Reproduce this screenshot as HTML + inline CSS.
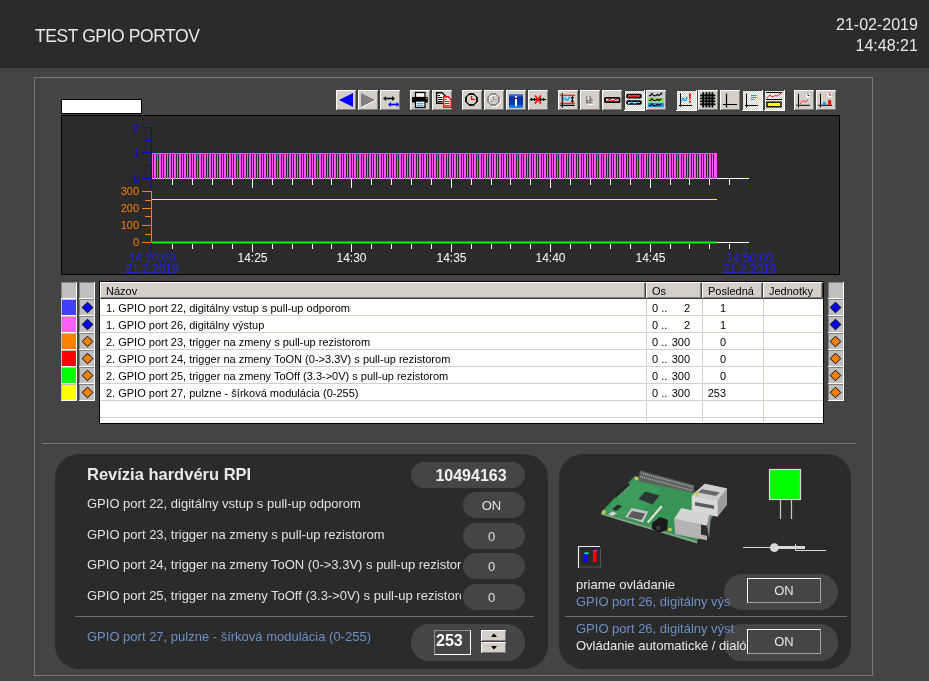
<!DOCTYPE html>
<html><head><meta charset="utf-8">
<style>
*{margin:0;padding:0;box-sizing:border-box}
html,body{width:929px;height:681px;overflow:hidden;background:#444444;font-family:"Liberation Sans",sans-serif;}
.a{position:absolute}
.tt,.lb,#title,#date,svg text{will-change:transform}
#hdr{left:0;top:0;width:929px;height:68px;background:#2b2b2b}
#title{left:35px;top:26px;font-size:17.5px;letter-spacing:-0.42px;color:#e8e8e8;white-space:nowrap}
#date{right:11px;top:15px;font-size:16px;color:#e8e8e8;text-align:right;line-height:20.5px}
#frame{left:34px;top:77px;width:839px;height:599px;border:1px solid #777}
#whitebox{left:61px;top:99px;width:81px;height:15px;background:#fff;border:1px solid #000}
#chart{left:61px;top:115px;width:779px;height:160px;background:#2b2b2b;border:1px solid #000}
.btn{position:absolute;top:90px;width:20px;height:20px;background:#d4d0c8;border-top:1px solid #fff;border-left:1px solid #fff;border-right:1px solid #808080;border-bottom:1px solid #808080}
.sw{position:absolute;width:17px;height:17px;border:1px solid #c0c0c0}
#tbl{left:99px;top:281px;width:725px;height:143px;background:#fff;border:1px solid #000;font-size:11px;color:#000}
.dp{background:#2b2b2b;border-radius:24px}
.pill{position:absolute;background:#444;border-radius:14px;color:#e6e6e6;text-align:center}
.lbl{position:absolute;color:#e0e0e0;font-size:13px;white-space:nowrap}
.blu{color:#6f92c0}
.lb{white-space:nowrap;line-height:normal}
.pl{background:#454545}
.tt{font-size:11px;color:#000;white-space:nowrap;line-height:13px}
</style></head>
<body>
<div id="hdr" class="a"></div>
<div id="title" class="a">TEST GPIO PORTOV</div>
<div id="date" class="a">21-02-2019<br>14:48:21</div>
<div id="frame" class="a"></div>
<div id="whitebox" class="a"></div>
<!--TB--><svg class="a" style="left:0;top:0" width="929" height="681" viewBox="0 0 929 681"><defs><pattern id="chk" x="0" y="0" width="2" height="2" patternUnits="userSpaceOnUse"><rect width="1" height="1" fill="#ffffff"/><rect x="1" y="1" width="1" height="1" fill="#ffffff"/></pattern><linearGradient id="ig" x1="0" y1="0" x2="0" y2="1"><stop offset="0" stop-color="#6a8cf0"/><stop offset="0.25" stop-color="#0a2a9a"/><stop offset="0.7" stop-color="#0a3aaa"/><stop offset="1" stop-color="#1090ff"/></linearGradient></defs><rect x="336" y="90" width="21" height="21" fill="#404040"/><rect x="336" y="90" width="20" height="20" fill="#ffffff"/><rect x="337" y="91" width="19" height="19" fill="#808080"/><rect x="337" y="91" width="18" height="18" fill="#d4d0c8"/><rect x="358" y="90" width="21" height="21" fill="#404040"/><rect x="358" y="90" width="20" height="20" fill="#ffffff"/><rect x="359" y="91" width="19" height="19" fill="#808080"/><rect x="359" y="91" width="18" height="18" fill="#d4d0c8"/><rect x="380" y="90" width="21" height="21" fill="#404040"/><rect x="380" y="90" width="20" height="20" fill="#ffffff"/><rect x="381" y="91" width="19" height="19" fill="#808080"/><rect x="381" y="91" width="18" height="18" fill="#d4d0c8"/><rect x="410" y="90" width="21" height="21" fill="#404040"/><rect x="410" y="90" width="20" height="20" fill="#ffffff"/><rect x="411" y="91" width="19" height="19" fill="#808080"/><rect x="411" y="91" width="18" height="18" fill="#d4d0c8"/><rect x="432" y="90" width="21" height="21" fill="#404040"/><rect x="432" y="90" width="20" height="20" fill="#ffffff"/><rect x="433" y="91" width="19" height="19" fill="#808080"/><rect x="433" y="91" width="18" height="18" fill="#d4d0c8"/><rect x="462" y="90" width="21" height="21" fill="#404040"/><rect x="462" y="90" width="20" height="20" fill="#ffffff"/><rect x="463" y="91" width="19" height="19" fill="#808080"/><rect x="463" y="91" width="18" height="18" fill="#d4d0c8"/><rect x="484" y="90" width="21" height="21" fill="#404040"/><rect x="484" y="90" width="20" height="20" fill="#ffffff"/><rect x="485" y="91" width="19" height="19" fill="#808080"/><rect x="485" y="91" width="18" height="18" fill="#d4d0c8"/><rect x="506" y="90" width="21" height="21" fill="#404040"/><rect x="506" y="90" width="20" height="20" fill="#ffffff"/><rect x="507" y="91" width="19" height="19" fill="#808080"/><rect x="507" y="91" width="18" height="18" fill="#d4d0c8"/><rect x="528" y="90" width="21" height="21" fill="#404040"/><rect x="528" y="90" width="20" height="20" fill="#ffffff"/><rect x="529" y="91" width="19" height="19" fill="#808080"/><rect x="529" y="91" width="18" height="18" fill="#d4d0c8"/><rect x="558" y="90" width="21" height="21" fill="#404040"/><rect x="558" y="90" width="20" height="20" fill="#ffffff"/><rect x="559" y="91" width="19" height="19" fill="#808080"/><rect x="559" y="91" width="18" height="18" fill="#d4d0c8"/><rect x="580" y="90" width="21" height="21" fill="#404040"/><rect x="580" y="90" width="20" height="20" fill="#ffffff"/><rect x="581" y="91" width="19" height="19" fill="#808080"/><rect x="581" y="91" width="18" height="18" fill="#d4d0c8"/><rect x="602" y="90" width="21" height="21" fill="#404040"/><rect x="602" y="90" width="20" height="20" fill="#ffffff"/><rect x="603" y="91" width="19" height="19" fill="#808080"/><rect x="603" y="91" width="18" height="18" fill="#d4d0c8"/><rect x="624" y="90" width="21" height="21" fill="#ffffff"/><rect x="624" y="90" width="20" height="20" fill="#404040"/><rect x="625" y="91" width="19" height="19" fill="#d4d0c8"/><rect x="625" y="91" width="19" height="19" fill="url(#chk)"/><rect x="646" y="90" width="21" height="21" fill="#404040"/><rect x="646" y="90" width="20" height="20" fill="#ffffff"/><rect x="647" y="91" width="19" height="19" fill="#808080"/><rect x="647" y="91" width="18" height="18" fill="#d4d0c8"/><rect x="676" y="90" width="21" height="21" fill="#ffffff"/><rect x="676" y="90" width="20" height="20" fill="#404040"/><rect x="677" y="91" width="19" height="19" fill="#d4d0c8"/><rect x="677" y="91" width="19" height="19" fill="url(#chk)"/><rect x="698" y="90" width="21" height="21" fill="#404040"/><rect x="698" y="90" width="20" height="20" fill="#ffffff"/><rect x="699" y="91" width="19" height="19" fill="#808080"/><rect x="699" y="91" width="18" height="18" fill="#d4d0c8"/><rect x="720" y="90" width="21" height="21" fill="#404040"/><rect x="720" y="90" width="20" height="20" fill="#ffffff"/><rect x="721" y="91" width="19" height="19" fill="#808080"/><rect x="721" y="91" width="18" height="18" fill="#d4d0c8"/><rect x="742" y="90" width="21" height="21" fill="#ffffff"/><rect x="742" y="90" width="20" height="20" fill="#404040"/><rect x="743" y="91" width="19" height="19" fill="#d4d0c8"/><rect x="743" y="91" width="19" height="19" fill="url(#chk)"/><rect x="764" y="90" width="21" height="21" fill="#ffffff"/><rect x="764" y="90" width="20" height="20" fill="#404040"/><rect x="765" y="91" width="19" height="19" fill="#d4d0c8"/><rect x="765" y="91" width="19" height="19" fill="url(#chk)"/><rect x="794" y="90" width="21" height="21" fill="#404040"/><rect x="794" y="90" width="20" height="20" fill="#ffffff"/><rect x="795" y="91" width="19" height="19" fill="#808080"/><rect x="795" y="91" width="18" height="18" fill="#d4d0c8"/><rect x="816" y="90" width="21" height="21" fill="#404040"/><rect x="816" y="90" width="20" height="20" fill="#ffffff"/><rect x="817" y="91" width="19" height="19" fill="#808080"/><rect x="817" y="91" width="18" height="18" fill="#d4d0c8"/><g transform="translate(336,90)"><polygon points="3,10 17,3 17,17" fill="#0000ff"/></g><g transform="translate(358,90)"><polygon points="3,3 17,10 3,17" fill="#808080"/><path d="M3.5,17.5 L17.5,10.5" stroke="#ffffff" stroke-width="1"/></g><g transform="translate(380,90)"><path d="M3.5,8.5 H14.5" stroke="#000" stroke-width="1.6"/><path d="M3.5,8.5 l2.5,-2.5 v5 z M14.5,8.5 l-2.5,-2.5 v5 z" fill="#000"/><path d="M8.5,14.5 H19" stroke="#0000ff" stroke-width="1.6"/><path d="M8.5,14.5 l2.5,-2.5 v5 z M19,14.5 l-2.5,-2.5 v5 z" fill="#0000ff"/></g><g transform="translate(410,90)"><rect x="5.5" y="2.5" width="9.5" height="5" fill="#fff" stroke="#000" stroke-width="1.3"/><rect x="2" y="7" width="15.8" height="5.5" fill="#000"/><rect x="5.5" y="11" width="9.5" height="6.5" fill="#fff" stroke="#000" stroke-width="1.3"/><rect x="7" y="13.2" width="6.5" height="1" fill="#2090e0"/><rect x="7" y="15.2" width="6.5" height="1" fill="#2090e0"/><rect x="16" y="8" width="1" height="1" fill="#80ff40"/></g><g transform="translate(432,90)"><path d="M4.7,2.7 H10 L13.3,6 V13.3 H4.7 Z" fill="#fff" stroke="#000" stroke-width="1.4"/><circle cx="10.5" cy="5.5" r="0.8" fill="#fff"/><rect x="6" y="5" width="2" height="1" fill="#000"/><rect x="6" y="7" width="4.5" height="1" fill="#000"/><rect x="6" y="9" width="4.5" height="1" fill="#000"/><rect x="6" y="11" width="4.5" height="1" fill="#000"/><path d="M11.8,6.8 H16.2 L19.2,9.8 V17.2 H11.8 Z" fill="#fff" stroke="#ff0000" stroke-width="1.4"/><rect x="13" y="9" width="1.5" height="1" fill="#ff0000"/><rect x="13" y="11" width="4.6" height="1" fill="#ff0000"/><rect x="13" y="13" width="4.6" height="1" fill="#ff0000"/><rect x="13" y="15" width="4.6" height="1" fill="#ff0000"/></g><g transform="translate(462,90)"><polygon points="7.2,4 11.7,4 14.9,7.2 14.9,11.7 11.7,14.9 7.2,14.9 4,11.7 4,7.2" fill="none" stroke="#000" stroke-width="1.1"/><path d="M7,4 H12 M15,7 V12 M7,15 H12 M4,7 V12" stroke="#000" stroke-width="1.6"/><path d="M9.5,6 V9.3 H12.8" fill="none" stroke="#ff0000" stroke-width="1.3"/></g><g transform="translate(484,90)"><g transform="translate(1,1)"><polygon points="7.2,4 11.7,4 14.9,7.2 14.9,11.7 11.7,14.9 7.2,14.9 4,11.7 4,7.2" fill="none" stroke="#ffffff" stroke-width="1.1"/><path d="M7,4 H12 M15,7 V12 M7,15 H12 M4,7 V12" stroke="#ffffff" stroke-width="1.6"/></g><polygon points="7.2,4 11.7,4 14.9,7.2 14.9,11.7 11.7,14.9 7.2,14.9 4,11.7 4,7.2" fill="none" stroke="#808080" stroke-width="1.1"/><path d="M7,4 H12 M15,7 V12 M7,15 H12 M4,7 V12" stroke="#808080" stroke-width="1.6"/><circle cx="9.5" cy="7.5" r="0.6" fill="#505050"/><circle cx="9.5" cy="9.5" r="0.6" fill="#505050"/><circle cx="12" cy="9.5" r="0.6" fill="#505050"/><circle cx="7.5" cy="11.5" r="0.6" fill="#505050"/></g><g transform="translate(506,90)"><rect x="3" y="4" width="14" height="14" fill="url(#ig)"/><rect x="9" y="6" width="2" height="1.7" fill="#fff"/><rect x="9" y="9" width="2" height="7.3" fill="#fff"/></g><g transform="translate(528,90)"><path d="M2,9.5 H18" stroke="#000" stroke-width="1.3"/><path d="M3,8 l1.5,1.5 l-1.5,1.5 M16,8 l-1.5,1.5 l1.5,1.5 M6,8 l1.5,1.5 l-1.5,1.5 M13,8 l-1.5,1.5 l1.5,1.5" stroke="#000" fill="none" stroke-width="1"/><path d="M7,5.5 L13,13.5 M13,5.5 L7,13.5" stroke="#ff0000" stroke-width="1.6"/></g><g transform="translate(558,90)"><path d="M2.2,5.4 H17 M2.2,13.3 H17" stroke="#ff2020" stroke-width="1.2"/><path d="M4.3,3.3 V17.7 M2.2,15.3 H16.7" stroke="#000" stroke-width="1.2"/><path d="M5,11.5 L6,8.2 H7.5 L8.2,10 H10 L10.7,7.5 H12" fill="none" stroke="#20a8ff" stroke-width="1.3"/><path d="M14.4,7 V12" stroke="#000" stroke-width="1.1"/><path d="M14.4,6 l-1.8,2.2 h3.6 z M14.4,13 l-1.8,-2.2 h3.6 z" fill="#000"/></g><g transform="translate(580,90)"><path d="M7.2,14.3 H13.5 M14,11 L12,13" stroke="#fff" stroke-width="1"/><g fill="#808080"><rect x="6" y="6" width="1.4" height="7.5"/><rect x="6" y="12" width="6.8" height="1.3"/><rect x="9.3" y="6" width="1.5" height="6"/><polygon points="10.7,8 13.6,10 10.7,11.6"/><rect x="6" y="10.2" width="3.4" height="1.1"/></g><path d="M7.4,7.3 H9.2 M7.4,9.3 H9.2" stroke="#fff" stroke-width="0.9"/></g><g transform="translate(602,90)"><rect x="3" y="7.9" width="14.5" height="4.3" rx="0.8" fill="#fff" stroke="#000" stroke-width="1.8"/><path d="M3.8,11 l2,-0.3 l2,-1.5 l1.5,1.5 l2.5,0 l2,-1.5 l2,1" fill="none" stroke="#ff0000" stroke-width="1.1"/></g><g transform="translate(624,90)"><rect x="3.1" y="4.7" width="13.8" height="2.8" rx="0.8" fill="#fff" stroke="#000" stroke-width="1.8"/><path d="M3.8,7.2 l2,-0.3 l2,-1.5 l1.5,1.5 l2.5,0 l2,-1.5 l2,1" fill="none" stroke="#ff0000" stroke-width="1.1"/><rect x="3.1" y="11.1" width="13.8" height="2.8" rx="0.8" fill="#fff" stroke="#000" stroke-width="1.8"/><path d="M3.8,13.6 l2,-0.3 l2,-1.5 l1.5,1.5 l2.5,0 l2,-1.5 l2,1" fill="none" stroke="#20a0ff" stroke-width="1.1"/></g><g transform="translate(646,90)"><rect x="2" y="2.2" width="16" height="4.5" fill="#c8c4dc"/><rect x="2" y="7.8" width="16" height="3.8" fill="#80e040"/><rect x="2" y="12.7" width="16" height="4.5" fill="#1898e8"/><path d="M3,5.6 H4.5 L6,3.5 L7.5,5.6 H10 L11.5,4.3 L13,5.6 L15.5,3.5" fill="none" stroke="#000" stroke-width="1.1"/><circle cx="15.5" cy="3.5" r="0.9" fill="#000"/><path d="M3,10.5 H4.5 L6,8.6 L7.5,10.5 H10 L11.5,9.2 L13,10.5 L15.5,8.6" fill="none" stroke="#000" stroke-width="1.1"/><path d="M3,15.6 H4.5 L6,13.6 L7.5,15.6 H10 L11.5,14.2 L13,15.6 L15.5,13.6" fill="none" stroke="#000" stroke-width="1.1"/></g><g transform="translate(676,90)"><rect x="4" y="3.3" width="1" height="13.4" fill="#000"/><rect x="3" y="15" width="13.2" height="1" fill="#000"/><path d="M5.1,11.6 L6.5,8.4 H7.6 L8.1,10.3 H10 L10.5,7.3 H11.6" fill="none" stroke="#20a0ff" stroke-width="1.3"/><polygon points="12.9,3.5 14.9,3.5 14.5,9.8 13.3,9.8" fill="#ff0000"/><rect x="13" y="10.8" width="1.8" height="1.8" fill="#ff0000"/></g><g transform="translate(698,90)"><rect x="4.3" y="2.2" width="1.8" height="15.3" fill="#000"/><rect x="7.5" y="2.2" width="1.8" height="15.3" fill="#000"/><rect x="10.5" y="2.2" width="1.8" height="15.3" fill="#000"/><rect x="13.5" y="2.2" width="1.8" height="15.3" fill="#000"/><rect x="2.3" y="4.5" width="15" height="1.8" fill="#000"/><rect x="2.3" y="7.5" width="15" height="1.8" fill="#000"/><rect x="2.3" y="10.4" width="15" height="1.8" fill="#000"/><rect x="2.3" y="13.4" width="15" height="1.8" fill="#000"/></g><g transform="translate(720,90)"><path d="M6.5,3.5 V17.5 M3,14.5 H17" stroke="#000" stroke-width="1.2"/></g><g transform="translate(742,90)"><rect x="4" y="3.6" width="1" height="13.9" fill="#000"/><rect x="3" y="15" width="12.8" height="1" fill="#000"/><rect x="9" y="5" width="6" height="1" fill="#20a0ff"/><rect x="9" y="7" width="6" height="1" fill="#20a0ff"/><rect x="9" y="9" width="3.5" height="1" fill="#20a0ff"/></g><g transform="translate(764,90)"><rect x="2.2" y="2" width="15.9" height="1" fill="#000"/><rect x="2.2" y="9" width="15.9" height="1" fill="#000"/><path d="M2.5,8 L4.5,6.5 L6,5 L7.5,6.5 L9.5,6.5 L11.5,5.5 L13.5,6 L16.5,3.5" fill="none" stroke="#ff2020" stroke-width="1"/><path d="M17.5,3 l-2,0.3 l1.2,1.5 z" fill="#ff2020"/><rect x="3" y="12.2" width="14" height="4.6" fill="#ffff00" stroke="#000" stroke-width="1.4"/></g><g transform="translate(794,90)"><rect x="4" y="3.8" width="1" height="13.7" fill="#000"/><rect x="2.2" y="14.8" width="13.7" height="1" fill="#000"/><path d="M6.1,13.9 L9.2,10.3 L11.1,12.2 L13.9,10" fill="none" stroke="#ff2020" stroke-width="1"/><circle cx="13.9" cy="5.5" r="3.1" fill="#fff" stroke="#a8c0c8" stroke-width="0.9"/><rect x="17" y="4.8" width="1.2" height="1.5" fill="#a8b8c0"/><path d="M13.9,3.3 V5.5 H15.6" fill="none" stroke="#404040" stroke-width="1"/></g><g transform="translate(816,90)"><rect x="4" y="3.8" width="1" height="13.7" fill="#000"/><rect x="2.2" y="14.8" width="13.7" height="1" fill="#000"/><rect x="7" y="12" width="2.8" height="3" fill="#1898e8"/><rect x="12.1" y="10" width="3" height="5" fill="#ff1010"/><circle cx="13.7" cy="5.2" r="3.1" fill="#fff" stroke="#a8c0c8" stroke-width="0.9"/><rect x="16.8" y="4.5" width="1.2" height="1.5" fill="#a8b8c0"/><path d="M13.7,3 V5.2 H15.4" fill="none" stroke="#ff0000" stroke-width="1"/></g></svg><!--/TB-->
<div id="chart" class="a"></div>
<svg class="a" style="left:0;top:0" width="929" height="681" viewBox="0 0 929 681" font-family="Liberation Sans" font-size="11"><defs><pattern id="pm" x="153" y="153" width="5" height="26" patternUnits="userSpaceOnUse"><rect x="0" y="0" width="5" height="26" fill="#ff55ff"/><rect x="0" y="1" width="1" height="24" fill="#2b2b2b"/><rect x="3" y="1" width="1" height="24" fill="#2b2b2b"/><rect x="0" y="25" width="1" height="1" fill="#ffffff"/><rect x="3" y="25" width="1" height="1" fill="#ffffff"/></pattern></defs><rect x="152" y="178" width="597" height="1" fill="#ffffff"/><rect x="152" y="153" width="565" height="26" fill="url(#pm)"/><rect x="716" y="153" width="1" height="26" fill="#ff55ff"/><rect x="151" y="127" width="1" height="61" fill="#0000ff"/><rect x="142" y="127" width="10" height="1" fill="#0000ff"/><rect x="145" y="140" width="7" height="1" fill="#0000ff"/><rect x="142" y="152" width="10" height="1" fill="#0000ff"/><rect x="145" y="165" width="7" height="1" fill="#0000ff"/><rect x="142" y="178" width="10" height="1" fill="#0000ff"/><rect x="151" y="191" width="1" height="52" fill="#ff8000"/><rect x="142" y="191" width="10" height="1" fill="#ff8000"/><rect x="145" y="200" width="7" height="1" fill="#ff8000"/><rect x="142" y="208" width="10" height="1" fill="#ff8000"/><rect x="145" y="216" width="7" height="1" fill="#ff8000"/><rect x="142" y="225" width="10" height="1" fill="#ff8000"/><rect x="145" y="234" width="7" height="1" fill="#ff8000"/><rect x="142" y="242" width="10" height="1" fill="#ff8000"/><rect x="152" y="199" width="565" height="1" fill="#ffff00"/><rect x="152" y="242" width="597" height="1" fill="#ffffff"/><rect x="152" y="241" width="565" height="1" fill="#9a4c1c"/><rect x="152" y="242" width="565" height="1" fill="#00ff00"/><rect x="152" y="243" width="565" height="1" fill="#9a4c1c"/><rect x="172" y="179" width="1" height="6" fill="#ffffff"/><rect x="172" y="244" width="1" height="5" fill="#ffffff"/><rect x="192" y="179" width="1" height="6" fill="#ffffff"/><rect x="192" y="244" width="1" height="5" fill="#ffffff"/><rect x="212" y="179" width="1" height="6" fill="#ffffff"/><rect x="212" y="244" width="1" height="5" fill="#ffffff"/><rect x="232" y="179" width="1" height="6" fill="#ffffff"/><rect x="232" y="244" width="1" height="5" fill="#ffffff"/><rect x="252" y="179" width="1" height="9" fill="#ffffff"/><rect x="252" y="244" width="1" height="8" fill="#ffffff"/><rect x="272" y="179" width="1" height="6" fill="#ffffff"/><rect x="272" y="244" width="1" height="5" fill="#ffffff"/><rect x="292" y="179" width="1" height="6" fill="#ffffff"/><rect x="292" y="244" width="1" height="5" fill="#ffffff"/><rect x="312" y="179" width="1" height="6" fill="#ffffff"/><rect x="312" y="244" width="1" height="5" fill="#ffffff"/><rect x="331" y="179" width="1" height="6" fill="#ffffff"/><rect x="331" y="244" width="1" height="5" fill="#ffffff"/><rect x="351" y="179" width="1" height="9" fill="#ffffff"/><rect x="351" y="244" width="1" height="8" fill="#ffffff"/><rect x="371" y="179" width="1" height="6" fill="#ffffff"/><rect x="371" y="244" width="1" height="5" fill="#ffffff"/><rect x="391" y="179" width="1" height="6" fill="#ffffff"/><rect x="391" y="244" width="1" height="5" fill="#ffffff"/><rect x="411" y="179" width="1" height="6" fill="#ffffff"/><rect x="411" y="244" width="1" height="5" fill="#ffffff"/><rect x="431" y="179" width="1" height="6" fill="#ffffff"/><rect x="431" y="244" width="1" height="5" fill="#ffffff"/><rect x="451" y="179" width="1" height="9" fill="#ffffff"/><rect x="451" y="244" width="1" height="8" fill="#ffffff"/><rect x="471" y="179" width="1" height="6" fill="#ffffff"/><rect x="471" y="244" width="1" height="5" fill="#ffffff"/><rect x="491" y="179" width="1" height="6" fill="#ffffff"/><rect x="491" y="244" width="1" height="5" fill="#ffffff"/><rect x="510" y="179" width="1" height="6" fill="#ffffff"/><rect x="510" y="244" width="1" height="5" fill="#ffffff"/><rect x="530" y="179" width="1" height="6" fill="#ffffff"/><rect x="530" y="244" width="1" height="5" fill="#ffffff"/><rect x="550" y="179" width="1" height="9" fill="#ffffff"/><rect x="550" y="244" width="1" height="8" fill="#ffffff"/><rect x="570" y="179" width="1" height="6" fill="#ffffff"/><rect x="570" y="244" width="1" height="5" fill="#ffffff"/><rect x="590" y="179" width="1" height="6" fill="#ffffff"/><rect x="590" y="244" width="1" height="5" fill="#ffffff"/><rect x="610" y="179" width="1" height="6" fill="#ffffff"/><rect x="610" y="244" width="1" height="5" fill="#ffffff"/><rect x="630" y="179" width="1" height="6" fill="#ffffff"/><rect x="630" y="244" width="1" height="5" fill="#ffffff"/><rect x="650" y="179" width="1" height="9" fill="#ffffff"/><rect x="650" y="244" width="1" height="8" fill="#ffffff"/><rect x="670" y="179" width="1" height="6" fill="#ffffff"/><rect x="670" y="244" width="1" height="5" fill="#ffffff"/><rect x="689" y="179" width="1" height="6" fill="#ffffff"/><rect x="689" y="244" width="1" height="5" fill="#ffffff"/><rect x="709" y="179" width="1" height="6" fill="#ffffff"/><rect x="709" y="244" width="1" height="5" fill="#ffffff"/><rect x="729" y="179" width="1" height="6" fill="#ffffff"/><rect x="729" y="244" width="1" height="5" fill="#ffffff"/><rect x="749" y="179" width="1" height="9" fill="#0000ff"/><rect x="749" y="244" width="1" height="8" fill="#0000ff"/><rect x="151" y="243" width="1" height="9" fill="#0000ff"/><text x="139" y="131.5" text-anchor="end" fill="#0000ff">2</text><text x="139" y="156.5" text-anchor="end" fill="#0000ff">1</text><text x="139" y="182.5" text-anchor="end" fill="#0000ff">0</text><text x="139" y="195" text-anchor="end" fill="#ff8000">300</text><text x="139" y="212" text-anchor="end" fill="#ff8000">200</text><text x="139" y="229" text-anchor="end" fill="#ff8000">100</text><text x="139" y="246" text-anchor="end" fill="#ff8000">0</text><text x="252.5" y="262" text-anchor="middle" fill="#ffffff" font-size="12">14:25</text><text x="351.5" y="262" text-anchor="middle" fill="#ffffff" font-size="12">14:30</text><text x="451.5" y="262" text-anchor="middle" fill="#ffffff" font-size="12">14:35</text><text x="550.5" y="262" text-anchor="middle" fill="#ffffff" font-size="12">14:40</text><text x="650.5" y="262" text-anchor="middle" fill="#ffffff" font-size="12">14:45</text><text x="152" y="262" text-anchor="middle" fill="#2020ff" font-size="12">14:20:00</text><text x="152" y="273" text-anchor="middle" fill="#2020ff" font-size="12">21.2.2019</text><text x="749.5" y="262" text-anchor="middle" fill="#2020ff" font-size="12">14:50:00</text><text x="749.5" y="273" text-anchor="middle" fill="#2020ff" font-size="12">21.2.2019</text></svg>
<!--TBL--><div class="a" style="left:99px;top:281px;width:725px;height:143px;background:#fff;border:1px solid #000"></div>
<div class="a" style="left:100px;top:282px;width:723px;height:16px;background:#d4d0c8"></div>
<div class="a" style="left:100px;top:298px;width:723px;height:1px;background:#404040"></div>
<div class="a" style="left:100px;top:282px;width:546px;height:16px;border-top:1px solid #fff;border-left:1px solid #fff;border-right:1px solid #404040;background:#d4d0c8;box-shadow:inset -1px -1px 0 #808080"></div>
<div class="a" style="left:646px;top:282px;width:56px;height:16px;border-top:1px solid #fff;border-left:1px solid #fff;border-right:1px solid #404040;background:#d4d0c8;box-shadow:inset -1px -1px 0 #808080"></div>
<div class="a" style="left:702px;top:282px;width:61px;height:16px;border-top:1px solid #fff;border-left:1px solid #fff;border-right:1px solid #404040;background:#d4d0c8;box-shadow:inset -1px -1px 0 #808080"></div>
<div class="a" style="left:763px;top:282px;width:60px;height:16px;border-top:1px solid #fff;border-left:1px solid #fff;border-right:1px solid #404040;background:#d4d0c8;box-shadow:inset -1px -1px 0 #808080"></div>
<div class="a" style="left:100px;top:315px;width:723px;height:1px;background:#d4d0c8"></div>
<div class="a" style="left:100px;top:332px;width:723px;height:1px;background:#d4d0c8"></div>
<div class="a" style="left:100px;top:349px;width:723px;height:1px;background:#d4d0c8"></div>
<div class="a" style="left:100px;top:366px;width:723px;height:1px;background:#d4d0c8"></div>
<div class="a" style="left:100px;top:383px;width:723px;height:1px;background:#d4d0c8"></div>
<div class="a" style="left:100px;top:400px;width:723px;height:1px;background:#d4d0c8"></div>
<div class="a" style="left:100px;top:417px;width:723px;height:1px;background:#d4d0c8"></div>
<div class="a" style="left:646px;top:299px;width:1px;height:124px;background:#d4d0c8"></div>
<div class="a" style="left:702px;top:299px;width:1px;height:124px;background:#d4d0c8"></div>
<div class="a" style="left:763px;top:299px;width:1px;height:124px;background:#d4d0c8"></div>
<div class="a tt" style="left:106px;top:285px">Názov</div>
<div class="a tt" style="left:652px;top:285px">Os</div>
<div class="a tt" style="left:708px;top:285px">Posledná</div>
<div class="a tt" style="left:769px;top:285px">Jednotky</div>
<div class="a tt" style="left:106px;top:302px">1. GPIO port 22, digitálny vstup s pull-up odporom</div>
<div class="a tt" style="left:652px;top:302px">0 ..</div>
<div class="a tt" style="left:650px;top:302px;width:40px;text-align:right">2</div>
<div class="a tt" style="left:700px;top:302px;width:26px;text-align:right">1</div>
<div class="a tt" style="left:106px;top:319px">1. GPIO port 26, digitálny výstup</div>
<div class="a tt" style="left:652px;top:319px">0 ..</div>
<div class="a tt" style="left:650px;top:319px;width:40px;text-align:right">2</div>
<div class="a tt" style="left:700px;top:319px;width:26px;text-align:right">1</div>
<div class="a tt" style="left:106px;top:336px">2. GPIO port 23, trigger na zmeny s pull-up rezistorom</div>
<div class="a tt" style="left:652px;top:336px">0 ..</div>
<div class="a tt" style="left:650px;top:336px;width:40px;text-align:right">300</div>
<div class="a tt" style="left:700px;top:336px;width:26px;text-align:right">0</div>
<div class="a tt" style="left:106px;top:353px">2. GPIO port 24, trigger na zmeny ToON (0-&gt;3.3V) s pull-up rezistorom</div>
<div class="a tt" style="left:652px;top:353px">0 ..</div>
<div class="a tt" style="left:650px;top:353px;width:40px;text-align:right">300</div>
<div class="a tt" style="left:700px;top:353px;width:26px;text-align:right">0</div>
<div class="a tt" style="left:106px;top:370px">2. GPIO port 25, trigger na zmeny ToOff (3.3-&gt;0V) s pull-up rezistorom</div>
<div class="a tt" style="left:652px;top:370px">0 ..</div>
<div class="a tt" style="left:650px;top:370px;width:40px;text-align:right">300</div>
<div class="a tt" style="left:700px;top:370px;width:26px;text-align:right">0</div>
<div class="a tt" style="left:106px;top:387px">2. GPIO port 27, pulzne - šírková modulácia (0-255)</div>
<div class="a tt" style="left:652px;top:387px">0 ..</div>
<div class="a tt" style="left:650px;top:387px;width:40px;text-align:right">300</div>
<div class="a tt" style="left:700px;top:387px;width:26px;text-align:right">253</div>
<div class="a" style="left:61px;top:282px;width:16px;height:17px;background:#fff"></div><div class="a" style="left:61px;top:282px;width:15px;height:16px;background:#808080"></div><div class="a" style="left:62px;top:283px;width:14px;height:15px;background:#c0c0c0"></div>
<div class="a" style="left:79px;top:282px;width:16px;height:17px;background:#fff"></div><div class="a" style="left:79px;top:282px;width:15px;height:16px;background:#808080"></div><div class="a" style="left:80px;top:283px;width:14px;height:15px;background:#c0c0c0"></div>
<div class="a" style="left:828px;top:282px;width:16px;height:17px;background:#fff"></div><div class="a" style="left:828px;top:282px;width:15px;height:16px;background:#808080"></div><div class="a" style="left:829px;top:283px;width:14px;height:15px;background:#c0c0c0"></div>
<div class="a" style="left:61px;top:299px;width:16px;height:17px;background:#fff"></div><div class="a" style="left:61px;top:299px;width:15px;height:16px;background:#c0c0c0"></div><div class="a" style="left:62px;top:300px;width:14px;height:15px;background:#4040ff"></div>
<div class="a" style="left:79px;top:299px;width:16px;height:17px;background:#fff"></div><div class="a" style="left:79px;top:299px;width:15px;height:16px;background:#808080"></div><div class="a" style="left:80px;top:300px;width:14px;height:15px;background:#c0c0c0"></div>
<div class="a" style="left:828px;top:299px;width:16px;height:17px;background:#fff"></div><div class="a" style="left:828px;top:299px;width:15px;height:16px;background:#808080"></div><div class="a" style="left:829px;top:300px;width:14px;height:15px;background:#c0c0c0"></div>
<div class="a" style="left:61px;top:316px;width:16px;height:17px;background:#fff"></div><div class="a" style="left:61px;top:316px;width:15px;height:16px;background:#c0c0c0"></div><div class="a" style="left:62px;top:317px;width:14px;height:15px;background:#ff60ff"></div>
<div class="a" style="left:79px;top:316px;width:16px;height:17px;background:#fff"></div><div class="a" style="left:79px;top:316px;width:15px;height:16px;background:#808080"></div><div class="a" style="left:80px;top:317px;width:14px;height:15px;background:#c0c0c0"></div>
<div class="a" style="left:828px;top:316px;width:16px;height:17px;background:#fff"></div><div class="a" style="left:828px;top:316px;width:15px;height:16px;background:#808080"></div><div class="a" style="left:829px;top:317px;width:14px;height:15px;background:#c0c0c0"></div>
<div class="a" style="left:61px;top:333px;width:16px;height:17px;background:#fff"></div><div class="a" style="left:61px;top:333px;width:15px;height:16px;background:#c0c0c0"></div><div class="a" style="left:62px;top:334px;width:14px;height:15px;background:#ff8000"></div>
<div class="a" style="left:79px;top:333px;width:16px;height:17px;background:#fff"></div><div class="a" style="left:79px;top:333px;width:15px;height:16px;background:#808080"></div><div class="a" style="left:80px;top:334px;width:14px;height:15px;background:#c0c0c0"></div>
<div class="a" style="left:828px;top:333px;width:16px;height:17px;background:#fff"></div><div class="a" style="left:828px;top:333px;width:15px;height:16px;background:#808080"></div><div class="a" style="left:829px;top:334px;width:14px;height:15px;background:#c0c0c0"></div>
<div class="a" style="left:61px;top:350px;width:16px;height:17px;background:#fff"></div><div class="a" style="left:61px;top:350px;width:15px;height:16px;background:#c0c0c0"></div><div class="a" style="left:62px;top:351px;width:14px;height:15px;background:#ff0000"></div>
<div class="a" style="left:79px;top:350px;width:16px;height:17px;background:#fff"></div><div class="a" style="left:79px;top:350px;width:15px;height:16px;background:#808080"></div><div class="a" style="left:80px;top:351px;width:14px;height:15px;background:#c0c0c0"></div>
<div class="a" style="left:828px;top:350px;width:16px;height:17px;background:#fff"></div><div class="a" style="left:828px;top:350px;width:15px;height:16px;background:#808080"></div><div class="a" style="left:829px;top:351px;width:14px;height:15px;background:#c0c0c0"></div>
<div class="a" style="left:61px;top:367px;width:16px;height:17px;background:#fff"></div><div class="a" style="left:61px;top:367px;width:15px;height:16px;background:#c0c0c0"></div><div class="a" style="left:62px;top:368px;width:14px;height:15px;background:#00ff00"></div>
<div class="a" style="left:79px;top:367px;width:16px;height:17px;background:#fff"></div><div class="a" style="left:79px;top:367px;width:15px;height:16px;background:#808080"></div><div class="a" style="left:80px;top:368px;width:14px;height:15px;background:#c0c0c0"></div>
<div class="a" style="left:828px;top:367px;width:16px;height:17px;background:#fff"></div><div class="a" style="left:828px;top:367px;width:15px;height:16px;background:#808080"></div><div class="a" style="left:829px;top:368px;width:14px;height:15px;background:#c0c0c0"></div>
<div class="a" style="left:61px;top:384px;width:16px;height:17px;background:#fff"></div><div class="a" style="left:61px;top:384px;width:15px;height:16px;background:#c0c0c0"></div><div class="a" style="left:62px;top:385px;width:14px;height:15px;background:#ffff00"></div>
<div class="a" style="left:79px;top:384px;width:16px;height:17px;background:#fff"></div><div class="a" style="left:79px;top:384px;width:15px;height:16px;background:#808080"></div><div class="a" style="left:80px;top:385px;width:14px;height:15px;background:#c0c0c0"></div>
<div class="a" style="left:828px;top:384px;width:16px;height:17px;background:#fff"></div><div class="a" style="left:828px;top:384px;width:15px;height:16px;background:#808080"></div><div class="a" style="left:829px;top:385px;width:14px;height:15px;background:#c0c0c0"></div>
<svg class="a" style="left:0;top:0" width="929" height="681"><polygon points="87.5,302.2 92.8,307.5 87.5,312.8 82.2,307.5" fill="#0000ff" stroke="#000" stroke-width="1"/><polygon points="835.5,302.2 840.8,307.5 835.5,312.8 830.2,307.5" fill="#0000ff" stroke="#000" stroke-width="1"/><polygon points="87.5,319.2 92.8,324.5 87.5,329.8 82.2,324.5" fill="#0000ff" stroke="#000" stroke-width="1"/><polygon points="835.5,319.2 840.8,324.5 835.5,329.8 830.2,324.5" fill="#0000ff" stroke="#000" stroke-width="1"/><polygon points="87.5,336.2 92.8,341.5 87.5,346.8 82.2,341.5" fill="#ff8000" stroke="#000" stroke-width="1"/><polygon points="835.5,336.2 840.8,341.5 835.5,346.8 830.2,341.5" fill="#ff8000" stroke="#000" stroke-width="1"/><polygon points="87.5,353.2 92.8,358.5 87.5,363.8 82.2,358.5" fill="#ff8000" stroke="#000" stroke-width="1"/><polygon points="835.5,353.2 840.8,358.5 835.5,363.8 830.2,358.5" fill="#ff8000" stroke="#000" stroke-width="1"/><polygon points="87.5,370.2 92.8,375.5 87.5,380.8 82.2,375.5" fill="#ff8000" stroke="#000" stroke-width="1"/><polygon points="835.5,370.2 840.8,375.5 835.5,380.8 830.2,375.5" fill="#ff8000" stroke="#000" stroke-width="1"/><polygon points="87.5,387.2 92.8,392.5 87.5,397.8 82.2,392.5" fill="#ff8000" stroke="#000" stroke-width="1"/><polygon points="835.5,387.2 840.8,392.5 835.5,397.8 830.2,392.5" fill="#ff8000" stroke="#000" stroke-width="1"/></svg><!--/TBL-->
<div class="a" style="left:42px;top:443px;width:814px;height:1px;background:#777"></div>
<!--BL--><div class="a" style="left:55px;top:454px;width:493px;height:215px;background:#2b2b2b;border-radius:24px"></div>
<div class="a lb" style="left:87px;top:465px;font-size:16.5px;font-weight:bold;color:#e8e8e8">Revízia hardvéru RPI</div>
<div class="a lb" style="left:87px;top:496px;font-size:13px;color:#e0e0e0;width:374px;overflow:hidden">GPIO port 22, digitálny vstup s pull-up odporom</div>
<div class="a lb" style="left:87px;top:527px;font-size:13px;color:#e0e0e0;width:374px;overflow:hidden">GPIO port 23, trigger na zmeny s pull-up rezistorom</div>
<div class="a lb" style="left:87px;top:557px;font-size:13px;color:#e0e0e0;width:374px;overflow:hidden">GPIO port 24, trigger na zmeny ToON (0-&gt;3.3V) s pull-up rezistorom</div>
<div class="a lb" style="left:87px;top:588px;font-size:13px;color:#e0e0e0;width:374px;overflow:hidden">GPIO port 25, trigger na zmeny ToOff (3.3-&gt;0V) s pull-up rezistorom</div>
<div class="a" style="left:75px;top:616px;width:459px;height:1px;background:#6e6e6e"></div>
<div class="a lb" style="left:87px;top:629px;font-size:13px;color:#6b90c4">GPIO port 27, pulzne - šírková modulácia (0-255)</div>
<div class="a pl" style="left:411px;top:462px;width:114px;height:26px;border-radius:13px"></div>
<div class="a lb" style="left:411px;top:467px;width:120px;text-align:center;font-size:16px;font-weight:bold;color:#f0f0f0">10494163</div>
<div class="a pl" style="left:463px;top:492px;width:62px;height:26px;border-radius:13px"></div>
<div class="a lb" style="left:463px;top:498px;width:57px;text-align:center;font-size:13px;color:#e0e0e0">ON</div>
<div class="a pl" style="left:463px;top:523px;width:62px;height:26px;border-radius:13px"></div>
<div class="a lb" style="left:463px;top:529px;width:57px;text-align:center;font-size:13px;color:#e0e0e0">0</div>
<div class="a pl" style="left:463px;top:553px;width:62px;height:26px;border-radius:13px"></div>
<div class="a lb" style="left:463px;top:559px;width:57px;text-align:center;font-size:13px;color:#e0e0e0">0</div>
<div class="a pl" style="left:463px;top:584px;width:62px;height:26px;border-radius:13px"></div>
<div class="a lb" style="left:463px;top:590px;width:57px;text-align:center;font-size:13px;color:#e0e0e0">0</div>
<div class="a pl" style="left:411px;top:624px;width:114px;height:37px;border-radius:18px"></div>
<div class="a" style="left:434px;top:630px;width:37px;height:25px;border-top:1px solid #909090;border-left:1px solid #909090;border-right:1px solid #fff;border-bottom:1px solid #fff"></div>
<div class="a lb" style="left:436px;top:632px;font-size:16px;font-weight:bold;color:#ffffff">253</div>
<svg class="a" style="left:481px;top:630px" width="26" height="25"><g><rect x="0" y="0" width="26" height="12" fill="#404040"/><rect x="0" y="0" width="25" height="11" fill="#fff"/><rect x="1" y="1" width="24" height="10" fill="#808080"/><rect x="1" y="1" width="23" height="9" fill="#d4d0c8"/><polygon points="13,3.5 16,7 10,7" fill="#000"/></g><g transform="translate(0,12)"><rect x="0" y="0" width="26" height="12" fill="#404040"/><rect x="0" y="0" width="25" height="11" fill="#fff"/><rect x="1" y="1" width="24" height="10" fill="#808080"/><rect x="1" y="1" width="23" height="9" fill="#d4d0c8"/><polygon points="10,4 16,4 13,7.5" fill="#000"/></g></svg><!--/BL-->
<!--BR--><div class="a" style="left:559px;top:454px;width:292px;height:215px;background:#2b2b2b;border-radius:24px"></div>
<svg class="a" style="left:0;top:0" width="929" height="681" viewBox="0 0 929 681">
<polygon points="601,512.5 634.5,476 724,499 697,541" fill="#389455"/>
<polygon points="601,512.5 697,541 697,543.5 601,514.5" fill="#7aa884"/>
<polygon points="606,511 634,481 660,488 650,505 625,520" fill="#42a062" opacity="0.55"/>
<polygon points="640,470.5 694,485 694,493 638,481" fill="#5c625e"/>
<path d="M641,473 L693,487 M640,476.5 L692,490.5" stroke="#b8b8b8" stroke-width="1.1" stroke-dasharray="1.2,0.9"/>
<polygon points="638.3,499 645.4,491.4 659.5,495.5 652.4,504.4" fill="#2c3632"/>
<path d="M615,497 L629,484" stroke="#262626" stroke-width="2.6"/>
<path d="M616.5,498 L630,485.5" stroke="#909890" stroke-width="0.8"/>
<polygon points="625.4,516.7 631.3,507.9 648.3,511.4 643,522.6" fill="#c4c4c4"/>
<polygon points="628,517 632,511 645,513.5 641.5,520" fill="#5a5a5a"/>
<path d="M647.7,522.6 L661.8,506.1" stroke="#e4e4e4" stroke-width="2.2"/>
<polygon points="652,523 660,517 668,520 667,530 659,533 652,529" fill="#1a1a1a"/>
<circle cx="658.3" cy="528" r="2.2" fill="#3a3a3a"/>
<polygon points="674.1,519 681.2,507.9 709.4,514.4 707,526.1" fill="#d4d4d4"/>
<polygon points="674.1,519 707,526.1 707,540.2 675.3,534.3" fill="#b4b4b4"/>
<polygon points="701,524.5 708,526 708,536 701,534.5" fill="#2e2e2e"/>
<polygon points="707,526.1 709.4,514.4 711,516 709,538" fill="#8c8c8c"/>
<polygon points="704.7,483.8 727,488.5 727,505 717.6,516.7 700,500" fill="#9c9c9c"/>
<polygon points="704.7,483.8 727,488.5 717.6,500.3 691.7,495.6" fill="#cfcfcf"/>
<polygon points="702,489 720,492.5 716,496 698,492.5" fill="#6a6a6a"/>
<polygon points="691.7,495.6 717.6,500.3 717.6,516.7 691.7,511" fill="#d8d8d8"/>
<polygon points="695,502 714,505.5 714,509 695,505.5" fill="#5a5a5a"/>
<polygon points="612,509 618,504.5 622,506.5 616,511" fill="#2a2a2a"/>
<polygon points="608,514 613,511.5 617,513.5 612,516" fill="#d4d4d4"/>
<circle cx="636.5" cy="478.5" r="1.9" fill="#d0c050"/>
<circle cx="697" cy="494" r="1.9" fill="#d0c050"/>
<circle cx="604" cy="512" r="1.9" fill="#d0c050"/>
<circle cx="670" cy="529.6" r="1.9" fill="#d0c050"/>
<rect x="769.5" y="469.5" width="31" height="30" fill="#00ff00" stroke="#d8d8d8" stroke-width="1.2"/>
<path d="M780.5,500 V519 M791.5,500 V519" stroke="#c8c8c8" stroke-width="1.2"/>
<path d="M743,547.5 H775" stroke="#d8d8d8" stroke-width="1"/>
<rect x="775" y="546" width="30" height="3" fill="#d8d8d8"/>
<circle cx="774.4" cy="547.7" r="4.4" fill="#d8d8d8"/>
<path d="M795.5,544 V550.5 H826" fill="none" stroke="#d8d8d8" stroke-width="1"/>
<rect x="578" y="546" width="22" height="22" fill="#2b2b2b"/>
<path d="M578.5,568 V546.5 H600" fill="none" stroke="#e8e8e8" stroke-width="1.2"/>
<path d="M580,567 H600.5 V548" fill="none" stroke="#555" stroke-width="1.2"/>
<rect x="584" y="553.5" width="4" height="8.5" fill="#0000ff"/><rect x="584.5" y="552.5" width="4" height="1.5" fill="#00ffff"/>
<rect x="593" y="550.5" width="3" height="11.5" fill="#ff0000"/><rect x="596" y="551" width="1" height="11" fill="#a00000"/><rect x="593" y="550" width="4" height="1.5" fill="#ff00ff"/>
</svg>
<div class="a pl" style="left:724px;top:574px;width:114px;height:36px;border-radius:18px"></div>
<div class="a pl" style="left:724px;top:624px;width:114px;height:37px;border-radius:18px"></div>
<div class="a lb" style="left:576px;top:577px;font-size:13px;color:#e8e8e8">priame ovládanie</div>
<div class="a lb" style="left:576px;top:594px;font-size:13px;color:#6b90c4;width:154px;overflow:hidden">GPIO port 26, digitálny výstup</div>
<div class="a" style="left:565px;top:616px;width:282px;height:1px;background:#6e6e6e"></div>
<div class="a lb" style="left:576px;top:621px;font-size:13px;color:#6b90c4;width:158px;overflow:hidden">GPIO port 26, digitálny výstup</div>
<div class="a lb" style="left:576px;top:638px;font-size:13px;color:#e8e8e8;width:171px;overflow:hidden">Ovládanie automatické / dialóg</div>
<div class="a" style="left:747px;top:578px;width:74px;height:25px;background:#454545;border-top:1px solid #fff;border-left:1px solid #fff;border-right:1px solid #a0a0a0;border-bottom:1px solid #a0a0a0"></div>
<div class="a lb" style="left:747px;top:583px;width:74px;text-align:center;font-size:13px;color:#e8e8e8">ON</div>
<div class="a" style="left:747px;top:629px;width:74px;height:25px;background:#454545;border-top:1px solid #fff;border-left:1px solid #fff;border-right:1px solid #a0a0a0;border-bottom:1px solid #a0a0a0"></div>
<div class="a lb" style="left:747px;top:634px;width:74px;text-align:center;font-size:13px;color:#e8e8e8">ON</div><!--/BR-->
</body></html>
